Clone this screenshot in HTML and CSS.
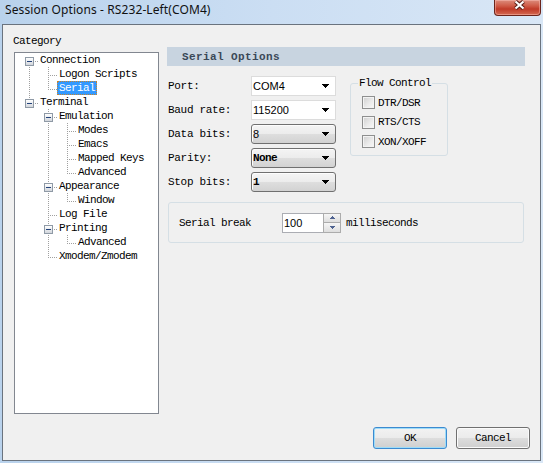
FILE: index.html
```html
<!DOCTYPE html>
<html>
<head>
<meta charset="utf-8">
<title>Session Options</title>
<link rel="stylesheet" href="styles.css">
</head>
<body>
<div class="window">
  <div class="titlebar">
    <span class="title">Session Options - RS232-Left(COM4)</span>
    <div class="close">
      <svg width="13" height="10" viewBox="0 0 13 10"><path d="M2.5 1.5 L10.5 8.5 M10.5 1.5 L2.5 8.5" stroke="#5a2019" stroke-width="4.2" fill="none"/><path d="M2.5 1.5 L10.5 8.5 M10.5 1.5 L2.5 8.5" stroke="#ffffff" stroke-width="2.2" fill="none"/></svg>
    </div>
  </div>
  <div class="client">
    <div class="main">
      <div class="left">
        <div class="cat-label">Category</div>
        <div class="tree">
          <div class="row"><span class="j first"><span class="box"></span></span><span class="lbl">Connection</span></div>
          <div class="row"><span class="g v"></span><span class="j tee"></span><span class="lbl">Logon Scripts</span></div>
          <div class="row"><span class="g v"></span><span class="j ell"></span><span class="lbl sel">Serial</span></div>
          <div class="row"><span class="j ell"><span class="box"></span></span><span class="lbl">Terminal</span></div>
          <div class="row"><span class="g"></span><span class="j tee"><span class="box"></span></span><span class="lbl">Emulation</span></div>
          <div class="row"><span class="g"></span><span class="g v"></span><span class="j tee"></span><span class="lbl">Modes</span></div>
          <div class="row"><span class="g"></span><span class="g v"></span><span class="j tee"></span><span class="lbl">Emacs</span></div>
          <div class="row"><span class="g"></span><span class="g v"></span><span class="j tee"></span><span class="lbl">Mapped Keys</span></div>
          <div class="row"><span class="g"></span><span class="g v"></span><span class="j ell"></span><span class="lbl">Advanced</span></div>
          <div class="row"><span class="g"></span><span class="j tee"><span class="box"></span></span><span class="lbl">Appearance</span></div>
          <div class="row"><span class="g"></span><span class="g v"></span><span class="j ell"></span><span class="lbl">Window</span></div>
          <div class="row"><span class="g"></span><span class="j tee"></span><span class="lbl">Log File</span></div>
          <div class="row"><span class="g"></span><span class="j tee"><span class="box"></span></span><span class="lbl">Printing</span></div>
          <div class="row"><span class="g"></span><span class="g v"></span><span class="j ell"></span><span class="lbl">Advanced</span></div>
          <div class="row"><span class="g"></span><span class="j ell"></span><span class="lbl">Xmodem/Zmodem</span></div>
        </div>
      </div>
      <div class="right">
        <div class="header">Serial Options</div>
        <div class="opts">
          <div class="form">
            <span class="flabel">Port:</span>
            <div class="combo edit"><span class="val sans">COM4</span><svg class="arr" width="7" height="4" viewBox="0 0 7 4"><path d="M0 0H7L3.5 4Z"/></svg></div>
            <span class="flabel">Baud rate:</span>
            <div class="combo edit"><span class="val sans">115200</span><svg class="arr" width="7" height="4" viewBox="0 0 7 4"><path d="M0 0H7L3.5 4Z"/></svg></div>
            <span class="flabel">Data bits:</span>
            <div class="combo list"><span class="val sans">8</span><svg class="arr" width="7" height="4" viewBox="0 0 7 4"><path d="M0 0H7L3.5 4Z"/></svg></div>
            <span class="flabel">Parity:</span>
            <div class="combo list"><span class="val bold">None</span><svg class="arr" width="7" height="4" viewBox="0 0 7 4"><path d="M0 0H7L3.5 4Z"/></svg></div>
            <span class="flabel">Stop bits:</span>
            <div class="combo list"><span class="val bold">1</span><svg class="arr" width="7" height="4" viewBox="0 0 7 4"><path d="M0 0H7L3.5 4Z"/></svg></div>
          </div>
          <fieldset class="flow">
            <legend>Flow Control</legend>
            <div class="chk"><span class="cb"></span><span>DTR/DSR</span></div>
            <div class="chk"><span class="cb"></span><span>RTS/CTS</span></div>
            <div class="chk"><span class="cb"></span><span>XON/XOFF</span></div>
          </fieldset>
        </div>
        <div class="break">
          <span class="brk-lbl">Serial break</span>
          <div class="spinedit">
            <div class="ed sans">100</div>
            <div class="spin">
              <span class="sp up"><svg width="5" height="3" viewBox="0 0 5 3"><path d="M2.5 0L5 3H0Z"/></svg></span>
              <span class="sp dn"><svg width="5" height="3" viewBox="0 0 5 3"><path d="M0 0H5L2.5 3Z"/></svg></span>
            </div>
          </div>
          <span class="ms">milliseconds</span>
        </div>
      </div>
    </div>
    <div class="footer">
      <button class="btn default">OK</button>
      <button class="btn">Cancel</button>
    </div>
  </div>
</div>
</body>
</html>
```
FILE: styles.css
```css
html, body {
  margin: 0;
  padding: 0;
}
body {
  width: 543px;
  height: 463px;
  overflow: hidden;
  font-family: "Liberation Mono", "DejaVu Sans Mono", monospace;
  font-size: 11px;
  letter-spacing: -0.6px;
  color: #000;
}
.window {
  display: flex;
  flex-direction: column;
  height: 463px;
  background: linear-gradient(to right, #b9d2ec 0%, #cbdef3 50%, #d9e7f6 100%);
}
.titlebar {
  height: 24px;
  flex: none;
  display: flex;
  justify-content: space-between;
  align-items: flex-start;
  padding-left: 5px;
}
.title {
  font-family: "Noto Sans", "Open Sans", sans-serif;
  font-size: 12px;
  letter-spacing: 0.1px;
  line-height: 16px;
  padding-top: 2px;
  color: #111;
}
.close {
  width: 47px;
  height: 16px;
  box-sizing: border-box;
  margin-right: 2px;
  border: 1px solid #6b241b;
  border-top: none;
  border-radius: 0 0 4px 4px;
  background: linear-gradient(#dc8c7c 0%, #cf5a46 40%, #c03a28 60%, #d46a52 100%);
  box-shadow: inset 0 0 0 1px rgba(255, 200, 190, 0.45);
  display: flex;
  justify-content: center;
  align-items: flex-start;
  padding-left: 3px;
}
.client {
  flex: 1;
  margin: 0 2px 2px 2px;
  border: 1px solid #6a737e;
  background: #f0f0f0;
  display: flex;
  flex-direction: column;
  padding: 8px 10px 11px 10px;
}
.main {
  display: flex;
}
.left {
  width: 146px;
  flex: none;
}
.cat-label {
  line-height: 14px;
  height: 14px;
  padding-top: 1px;
  box-sizing: border-box;
}
.tree {
  margin: 5px 0 0 1px;
  width: 145px;
  height: 362px;
  box-sizing: border-box;
  border: 1px solid #828790;
  background: #fff;
}
.row {
  display: flex;
  height: 14px;
}
.g {
  width: 19px;
  height: 14px;
  flex: none;
}
.g.v {
  background: repeating-linear-gradient(to bottom, #a0a0a0 0 1px, transparent 1px 2px) 14px 0 / 1px 14px no-repeat;
}
.j {
  width: 23px;
  height: 14px;
  flex: none;
  display: flex;
  align-items: flex-start;
}
.j.tee {
  background:
    repeating-linear-gradient(to bottom, #a0a0a0 0 1px, transparent 1px 2px) 14px 0 / 1px 14px no-repeat,
    repeating-linear-gradient(to right, #a0a0a0 0 1px, transparent 1px 2px) 14px 8px / 9px 1px no-repeat;
}
.j.ell {
  background:
    repeating-linear-gradient(to bottom, #a0a0a0 0 1px, transparent 1px 2px) 14px 0 / 1px 9px no-repeat,
    repeating-linear-gradient(to right, #a0a0a0 0 1px, transparent 1px 2px) 14px 8px / 9px 1px no-repeat;
}
.j.first {
  background:
    repeating-linear-gradient(to bottom, #a0a0a0 0 1px, transparent 1px 2px) 14px 8px / 1px 6px no-repeat,
    repeating-linear-gradient(to right, #a0a0a0 0 1px, transparent 1px 2px) 14px 8px / 9px 1px no-repeat;
}
.box {
  width: 9px;
  height: 9px;
  box-sizing: border-box;
  margin: 4px 0 0 10px;
  border: 1px solid #8f9aa6;
  background: linear-gradient(#ffffff, #d2d6dc);
  display: flex;
  align-items: center;
  justify-content: center;
}
.box::before {
  content: "";
  width: 5px;
  height: 1px;
  background: #23427a;
}
.lbl {
  height: 14px;
  box-sizing: border-box;
  line-height: 13px;
  padding: 1px 2px 0 2px;
  white-space: nowrap;
}
.lbl.sel {
  background: #3399ff;
  color: #fff;
  outline: 1px dotted #c8842c;
  outline-offset: -1px;
}
.right {
  margin: 14px 0 0 8px;
  width: 358px;
}
.header {
  height: 19px;
  line-height: 20px;
  padding-left: 15px;
  background: #c8d4e0;
  color: #3a4857;
  font-weight: bold;
  letter-spacing: 0.4px;
}
.opts {
  display: flex;
  align-items: flex-start;
  margin-top: 10px;
}
.form {
  display: grid;
  grid-template-columns: 83px 85px;
  grid-auto-rows: 20px;
  row-gap: 4px;
  align-items: center;
  margin-left: 1px;
}
.flabel {
  white-space: nowrap;
  letter-spacing: -0.3px;
}
.combo {
  height: 20px;
  box-sizing: border-box;
  display: flex;
  align-items: center;
  justify-content: space-between;
  padding: 0 6px 0 1px;
}
.combo.edit {
  background: #fff;
  border: 1px solid #dcdcdc;
}
.combo.list {
  border: 1px solid #707070;
  border-radius: 3px;
  background: linear-gradient(#f4f4f4 0%, #ececec 50%, #dedede 51%, #d2d2d2 100%);
  box-shadow: inset 1px 1px 0 #fdfdfd;
}
.sans {
  font-family: "Liberation Sans", Arial, sans-serif;
  font-size: 11px;
  letter-spacing: 0;
}
.bold {
  font-weight: bold;
}
.arr {
  display: block;
  shape-rendering: crispEdges;
  fill: #000;
}
.flow {
  margin: 1px 0 0 14px;
  width: 98px;
  height: 79px;
  min-width: 0;
  box-sizing: border-box;
  padding: 7px 0 0 7px;
  border: 1px solid #d5dfe5;
  border-radius: 3px;
}
.flow legend {
  padding: 0 1px;
  line-height: 12px;
}
.chk {
  display: flex;
  align-items: center;
  gap: 3px;
  height: 13px;
  margin-left: 4px;
  white-space: nowrap;
}
.chk + .chk {
  margin-top: 6.5px;
}
.cb {
  width: 13px;
  height: 13px;
  box-sizing: border-box;
  border: 1px solid #8e8f8f;
  background: linear-gradient(135deg, #cfcfcf 0%, #ececec 60%, #f8f8f8 100%);
  box-shadow: inset 0 0 0 1px #f3f3f3;
  flex: none;
}
.break {
  margin: 10px 0 0 1px;
  width: 356px;
  height: 41px;
  box-sizing: border-box;
  border: 1px solid #d5dfe5;
  border-radius: 3px;
  display: flex;
  align-items: center;
  padding-left: 10px;
}
.brk-lbl {
  width: 103px;
  flex: none;
}
.spinedit {
  display: flex;
  height: 20px;
}
.ed {
  width: 41px;
  box-sizing: border-box;
  border: 1px solid #abadb3;
  border-right: none;
  background: #fff;
  padding-left: 1px;
  display: flex;
  align-items: center;
}
.spin {
  width: 18px;
  box-sizing: border-box;
  border: 1px solid #acacac;
  display: flex;
  flex-direction: column;
  gap: 1px;
  background: #acacac;
}
.sp {
  flex: 1;
  display: flex;
  align-items: center;
  justify-content: center;
  background: linear-gradient(#f6f6f6, #dedede);
}
.sp svg {
  display: block;
  fill: #4e6290;
  shape-rendering: crispEdges;
}
.ms {
  margin-left: 5px;
}
.footer {
  margin-top: auto;
  display: flex;
  justify-content: flex-end;
  gap: 9px;
}
.btn {
  width: 74px;
  height: 22px;
  box-sizing: border-box;
  padding: 0;
  margin: 0;
  border: 1px solid #707070;
  border-radius: 3px;
  background: linear-gradient(#f2f2f2 0%, #ebebeb 50%, #dddddd 51%, #cfcfcf 100%);
  box-shadow: inset 0 0 0 1px #fbfbfb;
  font-family: "Liberation Mono", "DejaVu Sans Mono", monospace;
  font-size: 11px;
  letter-spacing: -0.6px;
  color: #000;
}
.btn.default {
  border-color: #3c8ad0;
  box-shadow: inset 0 0 0 1px #9edcf8;
}
```
